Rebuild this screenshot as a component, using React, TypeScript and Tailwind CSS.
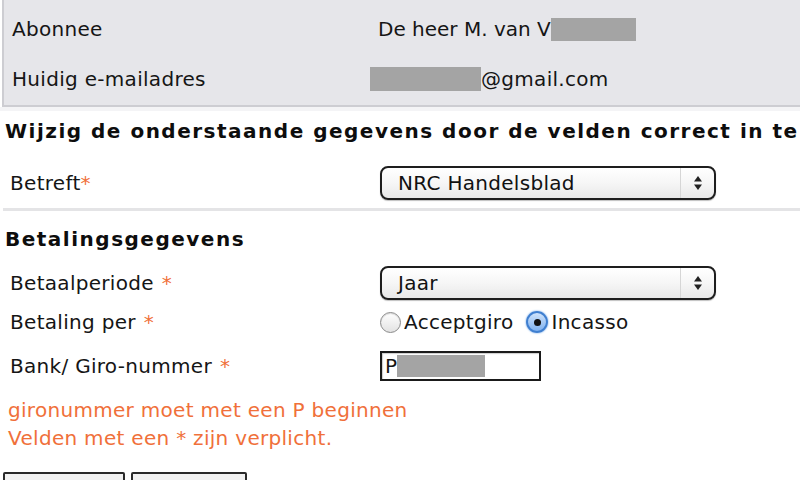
import React from "react"

const Req = ({ gap = true }: { gap?: boolean }) => (
  <span className={`text-[#f0703a] ${gap ? "ml-[8px]" : ""}`}>*</span>
)

const Redacted = ({ className }: { className: string }) => (
  <span className={`inline-block bg-[#a4a4a4] align-middle ${className}`} />
)

const SelectBox = ({ value }: { value: string }) => (
  <div className="flex h-[34px] w-[336px] items-stretch rounded-[8px] border-2 border-[#1e1e1e] bg-gradient-to-b from-white via-[#f6f6f6] to-[#e9e9e9] shadow-[0_1px_1px_rgba(0,0,0,0.25)]">
    <div className="flex flex-1 items-center pl-[16px] text-[#111]">{value}</div>
    <div className="flex w-[34px] items-center justify-center border-l border-[#d6d6d6]">
      <svg width="10" height="16" viewBox="0 0 10 16">
        <path d="M5 1 L9 6.5 H1 Z" fill="#222" />
        <path d="M5 15 L9 9.5 H1 Z" fill="#222" />
      </svg>
    </div>
  </div>
)

const Radio = ({ checked }: { checked?: boolean }) =>
  checked ? (
    <span className="flex h-[22px] w-[22px] items-center justify-center rounded-full border-2 border-[#3f7fd0] bg-gradient-to-b from-[#cfe3fb] to-[#7fb1ee] shadow-[0_0_2px_#5a9ae6]">
      <span className="h-[7px] w-[7px] rounded-full bg-[#111]" />
    </span>
  ) : (
    <span className="h-[21px] w-[21px] rounded-full border border-[#8a8a8a] bg-gradient-to-b from-white to-[#e2e2e2] shadow-[inset_0_1px_1px_rgba(0,0,0,0.15)]" />
  )

export default function App() {
  return (
    <div
      className="h-[480px] w-[800px] overflow-hidden bg-white text-[20px] tracking-[0.3px] text-[#151515]"
      style={{ fontFamily: '"DejaVu Sans", Verdana, sans-serif' }}
    >
      {/* subscriber summary */}
      <div className="ml-[2px] border-b-2 border-l-2 border-[#cdcdd2] bg-[#e6e6ea]">
        <div className="grid h-[54px] grid-cols-[366px_1fr] items-center pl-[8px] pt-[4px]">
          <span>Abonnee</span>
          <span className="flex items-center tracking-normal">
            De heer M. van V<Redacted className="h-[23px] w-[85px]" />
          </span>
        </div>
        <div className="grid h-[51px] grid-cols-[358px_1fr] items-center pl-[8px] pb-[2px]">
          <span>Huidig e-mailadres</span>
          <span className="flex items-center">
            <Redacted className="h-[24px] w-[111px]" />@gmail.com
          </span>
        </div>
      </div>
      <div className="h-[4px] bg-[#f4f4f6]" />

      <h2 className="mt-[8px] whitespace-nowrap pl-[5px] text-[20px] font-bold leading-[24px] tracking-[1.5px] text-[#0d0d0d]">
        Wijzig de onderstaande gegevens door de velden correct in te
      </h2>

      <div className="mt-[23px] grid h-[34px] grid-cols-[370px_1fr] items-center pl-[10px]">
        <span>
          Betreft
          <Req gap={false} />
        </span>
        <SelectBox value="NRC Handelsblad" />
      </div>
      <div className="ml-[3px] mt-[8px] h-[3px] bg-[#e4e4e6]" />

      <h3 className="mt-[16px] pl-[5px] text-[20px] font-bold leading-[24px] tracking-[1.5px] text-[#0d0d0d]">
        Betalingsgegevens
      </h3>

      <div className="mt-[15px] flex flex-col pl-[10px]">
        <div className="grid h-[34px] grid-cols-[370px_1fr] items-center">
          <span>
            Betaalperiode
            <Req />
          </span>
          <SelectBox value="Jaar" />
        </div>
        <div className="mt-[5px] grid h-[34px] grid-cols-[370px_1fr] items-center">
          <span>
            Betaling per
            <Req />
          </span>
          <div className="flex items-center">
            <Radio />
            <span className="ml-[3px]">Acceptgiro</span>
            <span className="ml-[13px]">
              <Radio checked />
            </span>
            <span className="ml-[3px]">Incasso</span>
          </div>
        </div>
        <div className="mt-[10px] grid h-[34px] grid-cols-[370px_1fr] items-center">
          <span>
            Bank/ Giro-nummer
            <Req />
          </span>
          <div className="flex h-[30px] w-[161px] items-center border-2 border-[#1a1a1a] bg-white pl-[3px] shadow-[inset_1px_1px_1px_rgba(0,0,0,0.2)]">
            P<Redacted className="h-[22px] w-[88px]" />
          </div>
        </div>
      </div>

      <div className="mt-[13px] pl-[8px] leading-[28px] text-[#f0703a]">
        <p>gironummer moet met een P beginnen</p>
        <p>Velden met een * zijn verplicht.</p>
      </div>

      <div className="mt-[20px] flex gap-[6px] pl-[3px]">
        <button className="h-[30px] w-[122px] rounded-[2px] border-2 border-[#2a2a2a] bg-[#f2f2f2]" />
        <button className="h-[30px] w-[116px] rounded-[2px] border-2 border-[#2a2a2a] bg-[#f2f2f2]" />
      </div>
    </div>
  )
}
